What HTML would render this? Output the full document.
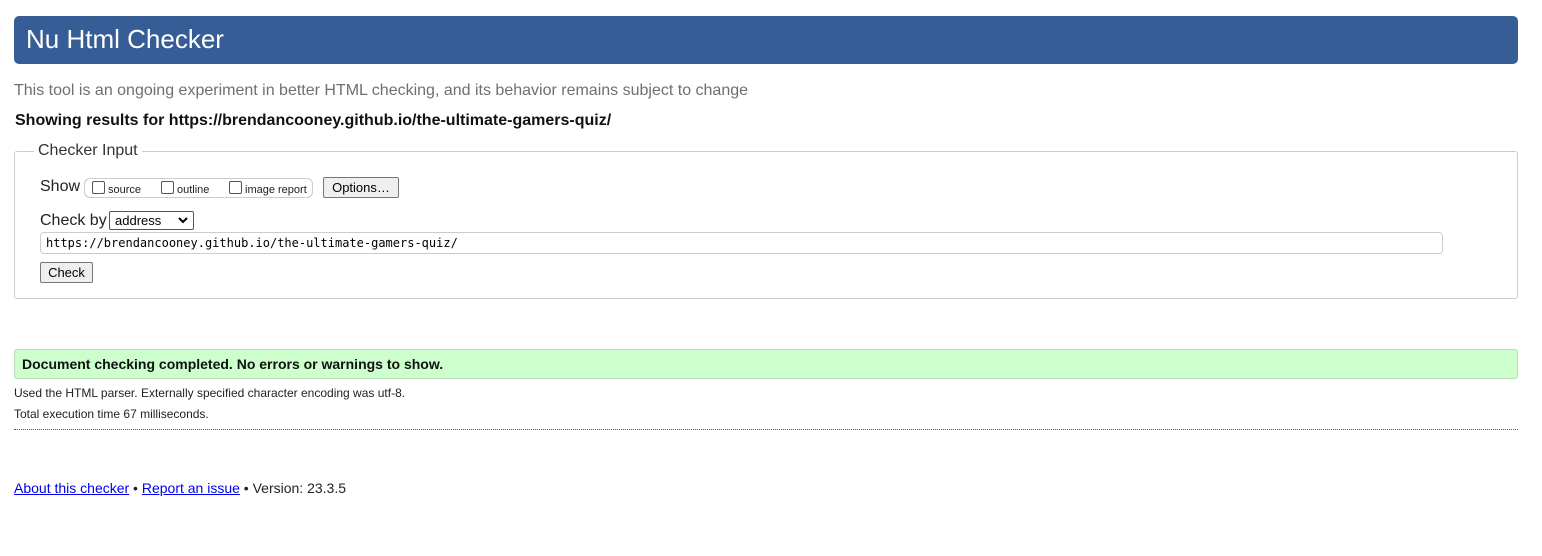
<!DOCTYPE html>
<html><head><meta charset="utf-8"><style>
body{margin:0;width:1542px;height:556px;background:#fff;font-family:"Liberation Sans",Arial,sans-serif;position:relative;overflow:hidden;color:#222}
.a{position:absolute;white-space:nowrap}
.hdr{left:14px;top:16px;width:1504px;height:48px;background:#365d95;border-radius:5px}
.hdr span{position:absolute;left:12px;top:8px;color:#fff;font-size:26px}
.fs{left:14px;top:151px;width:1502px;height:146px;border:1px solid #ccc;border-radius:3px}
.leg{left:34px;top:142px;background:#fff;padding:0 4px;font-size:16px;color:#333}
.cb{display:inline-block;width:11px;height:11px;border:1px solid #555;border-radius:2px;vertical-align:-1px;margin-right:3px;background:#fff}
.btn{border:1px solid #777;background:#efefef;border-radius:2px;font-size:13px;color:#000}
</style></head><body>
<div class="a hdr"><span>Nu Html Checker</span></div>
<div class="a" style="left:14px;top:82px;font-size:16px;color:#6f6f6f">This tool is an ongoing experiment in better HTML checking, and its behavior remains subject to change</div>
<div class="a" style="left:15px;top:112px;font-size:16px;font-weight:bold;color:#111">Showing results for https://brendancooney.github.io/the-ultimate-gamers-quiz/</div>
<div class="a fs"></div>
<div class="a leg">Checker Input</div>
<div class="a" style="left:40px;top:178px;font-size:16px;color:#222">Show</div>
<div class="a" style="left:84px;top:178px;width:227px;height:18px;border:1px solid #ccc;border-radius:6px;font-size:11px;color:#222">
 <span class="a" style="left:7px;top:2px"><span class="cb"></span>source</span>
 <span class="a" style="left:76px;top:2px"><span class="cb"></span>outline</span>
 <span class="a" style="left:144px;top:2px"><span class="cb"></span>image report</span>
</div>
<div class="a btn" style="left:323px;top:177px;width:74px;height:19px;line-height:19px;text-align:center">Options…</div>
<div class="a" style="left:40px;top:212px;font-size:16px;color:#222">Check by</div>
<div class="a" style="left:109px;top:211px;width:83px;height:17px;border:1px solid #555;border-radius:2px;font-size:13px;line-height:17px;color:#000"><span style="margin-left:5px">address</span><svg class="a" style="left:68px;top:5px" width="10" height="7" viewBox="0 0 10 7"><path d="M1 1L5 5L9 1" stroke="#000" stroke-width="2" fill="none"/></svg></div>
<div class="a" style="left:40px;top:232px;width:1401px;height:20px;border:1px solid #ccc;border-radius:4px;font-family:'DejaVu Sans Mono','Liberation Mono',monospace;font-size:12px;line-height:20px;color:#000"><span style="margin-left:5px">https://brendancooney.github.io/the-ultimate-gamers-quiz/</span></div>
<div class="a btn" style="left:40px;top:262px;width:51px;height:19px;line-height:19px;text-align:center">Check</div>
<div class="a" style="left:14px;top:349px;width:1502px;height:28px;background:#ccffcc;border:1px solid #bbddbb;border-radius:3px"><span class="a" style="left:7px;top:6px;font-size:14px;font-weight:bold;color:#111">Document checking completed. No errors or warnings to show.</span></div>
<div class="a" style="left:14px;top:386px;font-size:12px;color:#222">Used the HTML parser. Externally specified character encoding was utf-8.</div>
<div class="a" style="left:14px;top:407px;font-size:12px;color:#222">Total execution time 67 milliseconds.</div>
<div class="a" style="left:14px;top:429px;width:1504px;border-top:1px dotted #555"></div>
<div class="a" style="left:14px;top:480px;font-size:14px;color:#222"><span style="color:#00e;text-decoration:underline">About this checker</span> • <span style="color:#00e;text-decoration:underline">Report an issue</span> • Version: 23.3.5</div>
</body></html>
